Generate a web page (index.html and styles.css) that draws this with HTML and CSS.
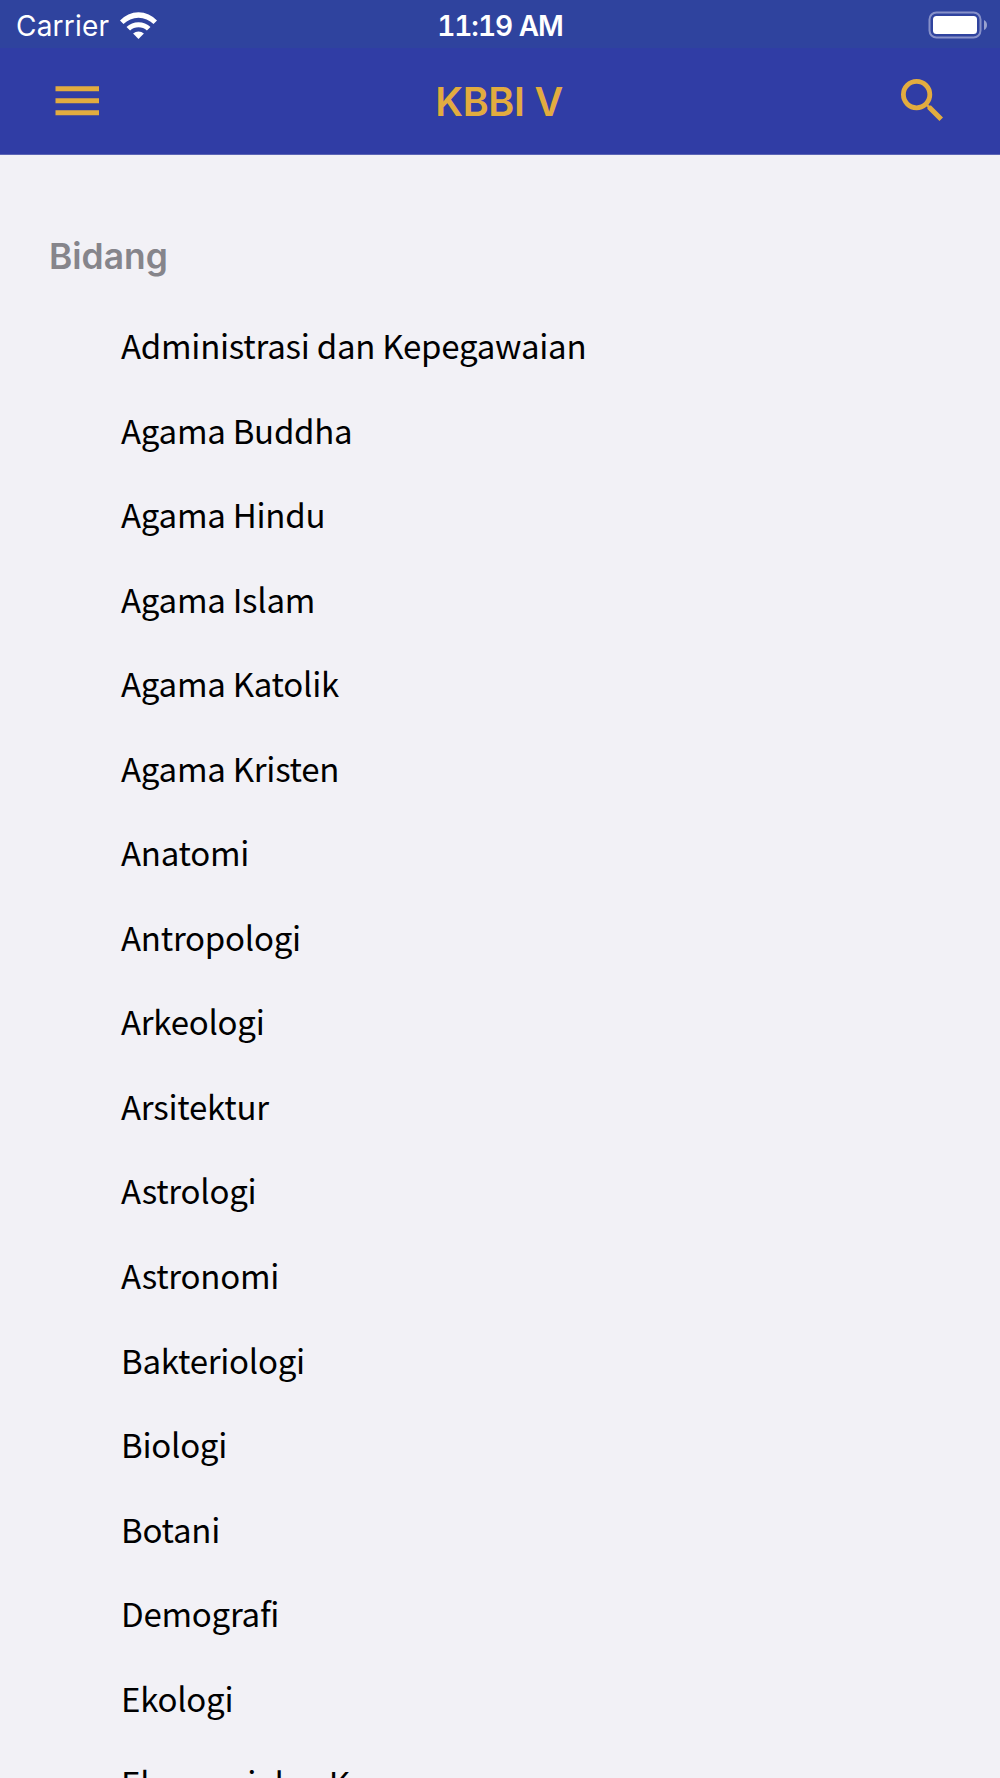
FILE: index.html
```html
<!DOCTYPE html>
<html lang="id">
<head>
<meta charset="utf-8">
<title>KBBI V</title>
<link rel="stylesheet" href="styles.css">
</head>
<body>
<div class="status">
  <div class="carrier"><span class="carrier-name">Carrier</span>
    <svg class="wifi" width="37" height="27" viewBox="0 0 37 27"><g fill="#fff"><path d="M0 8.500A25 25 0 0 1 37 8.500L33.500 12.100A21 21 0 0 0 3.500 12.100z"/><path d="M6.500 15.100A17 17 0 0 1 30.500 15.100L26.900 18.600A12.500 12.500 0 0 0 10.100 18.600z"/><path d="M13.100 21.500A8.200 8.200 0 0 1 23.900 21.500L18.500 27z"/></g></svg>
  </div>
  <div class="time">11:19 AM</div>
  <svg class="battery" width="60" height="28" viewBox="0 0 60 28"><rect x="1.500" y="1.500" width="51" height="25" rx="7" fill="none" stroke="#8791c9" stroke-width="2"/><rect x="5" y="5" width="44" height="18" rx="3.500" fill="#fff"/><path d="M56 9q3 1.500 3 5t-3 5z" fill="#98a2d0"/></svg>
</div>
<header class="bar">
  <svg class="menu" width="44" height="30" viewBox="0 0 44 30"><path d="M.5 2.700h43.500M.5 14.700h43.500M.5 26.700h43.500" stroke="#e2ac3f" stroke-width="5"/></svg>
  <h1 class="title">KBBI V</h1>
  <svg class="search" width="42" height="42" viewBox="3 3 17.490 17.490"><path fill="#e2ac3f" d="M15.500 14h-.79l-.28-.27A6.471 6.471 0 0 0 16 9.500 6.500 6.500 0 1 0 9.500 16c1.610 0 3.090-.59 4.230-1.570l.27.28v.79l5 4.990L20.490 19l-4.990-5zm-6 0C7.010 14 5 11.990 5 9.500S7.010 5 9.500 5 14 7.010 14 9.500 11.990 14 9.500 14z"/></svg>
</header>
<main>
<h2 class="heading">Bidang</h2>
<ul class="list">
<li>Administrasi dan Kepegawaian</li>
<li>Agama Buddha</li>
<li>Agama Hindu</li>
<li>Agama Islam</li>
<li>Agama Katolik</li>
<li>Agama Kristen</li>
<li>Anatomi</li>
<li>Antropologi</li>
<li>Arkeologi</li>
<li>Arsitektur</li>
<li>Astrologi</li>
<li>Astronomi</li>
<li>Bakteriologi</li>
<li>Biologi</li>
<li>Botani</li>
<li>Demografi</li>
<li>Ekologi</li>
<li>Ekonomi dan Keuangan</li>
</ul>
</main>
</body>
</html>
```
FILE: styles.css
```css
* { box-sizing: border-box; }
body { margin: 0; height: 1778px; overflow: hidden; background: #f2f1f6; }
.status { height: 48px; padding: 0 12px 0 16px; display: grid; grid-template-columns: 1fr auto 1fr; align-items: center; background: #2f439e; color: #fff; font: 28px/48px Inter, sans-serif; }
.carrier { display: flex; align-items: center; gap: 11px; height: 48px; }
.carrier-name { padding-top: 2px; letter-spacing: .2px; }
.time { padding: 2px 0 0; margin-left: -4px; font-weight: 600; font-size: 28px; font-variant-numeric: tabular-nums; letter-spacing: -1px; }
.battery { justify-self: end; }
.bar { height: 107px; padding: 0 57px 0 55px; display: grid; grid-template-columns: 1fr auto 1fr; align-items: center; background: #303da5; border-bottom: 1px solid #5c65b5; }
.menu { margin-bottom: 1px; }
.title { margin: 0; padding-top: 2px; color: #e2ac3f; font: 600 39.5px/100px Inter, sans-serif; letter-spacing: -.3px; }
.search { justify-self: end; margin-bottom: 3px; }
.heading { margin: 0; padding: 72px 0 0 49px; color: #86858b; font: 600 35.4px/60px Inter, sans-serif; }
.list { list-style: none; margin: 0; padding: 16px 0 0 121px; }
.list li { height: 84.55px; font: 33px/84px "Noto Sans CJK SC", sans-serif; letter-spacing: -.25px; color: #000; white-space: nowrap; }
```
